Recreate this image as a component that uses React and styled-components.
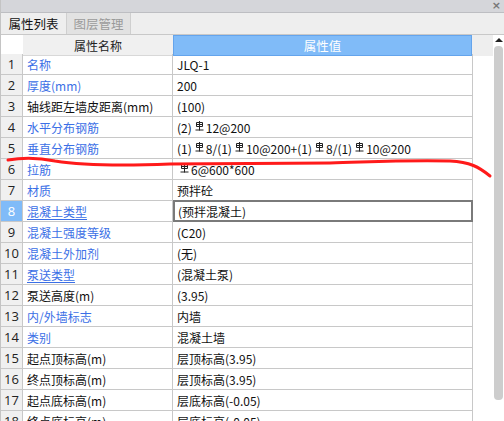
import styled, { createGlobalStyle } from "styled-components"

const GlobalStyle = createGlobalStyle`
    body {
        margin: 0;
        background: white;
        font-family: "Noto Sans CJK SC", "Liberation Sans", sans-serif;
    }
`

const rows = [
    { name: "名称", value: "JLQ-1", link: true },
    { name: "厚度(mm)", value: "200", link: true },
    { name: "轴线距左墙皮距离(mm)", value: "(100)" },
    { name: "水平分布钢筋", value: "(2)#12@200", link: true },
    { name: "垂直分布钢筋", value: "(1)#8/(1)#10@200+(1)#8/(1)#10@200", link: true },
    { name: "拉筋", value: "#6@600*600", link: true },
    { name: "材质", value: "预拌砼", link: true },
    { name: "混凝土类型", value: "(预拌混凝土)", link: true, underline: true, selected: true },
    { name: "混凝土强度等级", value: "(C20)", link: true },
    { name: "混凝土外加剂", value: "(无)", link: true },
    { name: "泵送类型", value: "(混凝土泵)", link: true, underline: true },
    { name: "泵送高度(m)", value: "(3.95)" },
    { name: "内/外墙标志", value: "内墙", link: true },
    { name: "类别", value: "混凝土墙", link: true },
    { name: "起点顶标高(m)", value: "层顶标高(3.95)" },
    { name: "终点顶标高(m)", value: "层顶标高(3.95)" },
    { name: "起点底标高(m)", value: "层底标高(-0.05)" },
    { name: "终点底标高(m)", value: "层底标高(-0.05)" },
]

// HRB400 rebar mark
const Rebar = () => (
    <RebarIcon width="9" height="10" viewBox="0 0 9 10">
        <path d="M1.5 1.5h6v4h-6z M4.5 0v9.5 M1.5 3.5h6 M0.5 9h8" fill="none" stroke="#222" strokeWidth="1" />
    </RebarIcon>
)

const renderValue = (value) => {
    const parts = value.split("#")
    return parts.map((p, i) => (
        <span key={i}>
            {i > 0 && <Rebar />}
            {p}
        </span>
    ))
}

const App = () => {
    return (
        <>
            <GlobalStyle />
            <Panel>
                <TitleBar>
                    <Close>×</Close>
                </TitleBar>
                <Tabs>
                    <Tab $active>属性列表</Tab>
                    <Tab>图层管理</Tab>
                </Tabs>
                <Body>
                    <Grid>
                        <HeadRow>
                            <Corner />
                            <HeadName>属性名称</HeadName>
                            <HeadValue>属性值</HeadValue>
                            <HeadFill />
                        </HeadRow>
                        {rows.map((r, i) => (
                            <Row key={i}>
                                <Num $selected={r.selected}>{i + 1}</Num>
                                <Name $link={r.link} $underline={r.underline}>{r.name}</Name>
                                <Value $selected={r.selected}>{renderValue(r.value)}</Value>
                            </Row>
                        ))}
                    </Grid>
                    <Scrollbar>
                        <Arrow />
                        <Thumb />
                    </Scrollbar>
                </Body>
                <Annotation width="504" height="421" viewBox="0 0 504 421">
                    <path
                        d="M8 160 C 20 158 35 157 55 161 C 80 165 120 166 170 164 L 330 163 C 370 162 400 160 450 161 C 470 162 479 167 490 176"
                        fill="none"
                        stroke="#ff1a1a"
                        strokeWidth="3"
                        strokeLinecap="round"
                    />
                </Annotation>
            </Panel>
        </>
    )
}

const Panel = styled.div`
    position: relative;
    width: 504px;
    height: 421px;
    overflow: hidden;
    font-size: 12px;
    color: #111;
    border-left: 1px solid #c4c4c4;
    box-sizing: border-box;
`

const TitleBar = styled.div`
    height: 12px;
    background: #d5d6da;
    border-bottom: 1px solid #bdbec2;
    display: flex;
    justify-content: flex-end;
    align-items: center;
    padding-right: 3px;
`

const Close = styled.span`
    font-family: "DejaVu Sans", sans-serif;
    font-size: 11px;
    font-weight: bold;
    color: #777;
    line-height: 12px;
`

const Tabs = styled.div`
    height: 21px;
    background: #eeeeee;
    border-bottom: 1px solid #c8c8c8;
    display: flex;
`

const Tab = styled.div`
    width: ${p => (p.$active ? "65px" : "63px")};
    display: flex;
    align-items: center;
    justify-content: center;
    font-size: 12.5px;
    color: ${p => (p.$active ? "#111" : "#9a9a9a")};
    background: ${p => (p.$active ? "#eeeeee" : "#e2e2e2")};
    border-right: 1px solid #cfcfcf;
`

const Body = styled.div`
    display: flex;
`

const Grid = styled.div`
    width: 492px;
`

const HeadRow = styled.div`
    display: grid;
    grid-template-columns: 22px 150px 299px 21px;
    height: 19px;
`

const Corner = styled.div`
    background: white;
    border-bottom: 1px solid #d8d8d8;
`

const HeadName = styled.div`
    background: #f0f0f0;
    border-bottom: 1px solid #d8d8d8;
    display: flex;
    align-items: center;
    justify-content: center;
    color: #222;
`

const HeadValue = styled.div`
    background: #80bbf8;
    border: 1px solid #64a4ec;
    box-sizing: border-box;
    display: flex;
    align-items: center;
    justify-content: center;
    color: white;
    font-size: 12.5px;
`

const HeadFill = styled.div`
    background: #eeeeee;
`

const Row = styled.div`
    display: grid;
    grid-template-columns: 22px 150px 300px;
    height: 21px;
`

const Cell = styled.div`
    border-bottom: 1px solid #c8c8c8;
    border-right: 1px solid #c8c8c8;
    display: flex;
    align-items: center;
    white-space: nowrap;
    box-sizing: border-box;
`

const Num = styled(Cell)`
    justify-content: center;
    font-family: "Open Sans", "Liberation Sans", sans-serif;
    font-size: 13px;
    background: ${p => (p.$selected ? "#80bbf8" : "#f0f0f0")};
    color: ${p => (p.$selected ? "white" : "#222")};
`

const Name = styled(Cell)`
    padding-left: 4px;
    color: ${p => (p.$link ? "#3b6fe6" : "#111")};
    text-decoration: ${p => (p.$underline ? "underline" : "none")};
    text-underline-offset: 2px;
`

const Value = styled(Cell)`
    padding-left: ${p => (p.$selected ? "3px" : "4px")};
    border: ${p => (p.$selected ? "2px solid #7a7a7a" : undefined)};
    border-right: ${p => (p.$selected ? "2px solid #7a7a7a" : "1px solid #c8c8c8")};
    border-bottom: ${p => (p.$selected ? "2px solid #7a7a7a" : "1px solid #c8c8c8")};
    margin-top: ${p => (p.$selected ? "-1px" : "0")};
    height: ${p => (p.$selected ? "22px" : "auto")};
`

const RebarIcon = styled.svg`
    vertical-align: 2px;
    margin: 0 2px 0 3px;
`

const Scrollbar = styled.div`
    width: 11px;
    display: flex;
    flex-direction: column;
    align-items: center;
    padding-top: 3px;
    gap: 4px;
`

const Arrow = styled.div`
    width: 0;
    height: 0;
    border-left: 4px solid transparent;
    border-right: 4px solid transparent;
    border-bottom: 4px solid #222;
`

const Thumb = styled.div`
    width: 9px;
    height: 354px;
    background: #cdcdcd;
    border-radius: 4px;
`

const Annotation = styled.svg`
    position: absolute;
    left: -1px;
    top: 0;
    pointer-events: none;
`

export default App
